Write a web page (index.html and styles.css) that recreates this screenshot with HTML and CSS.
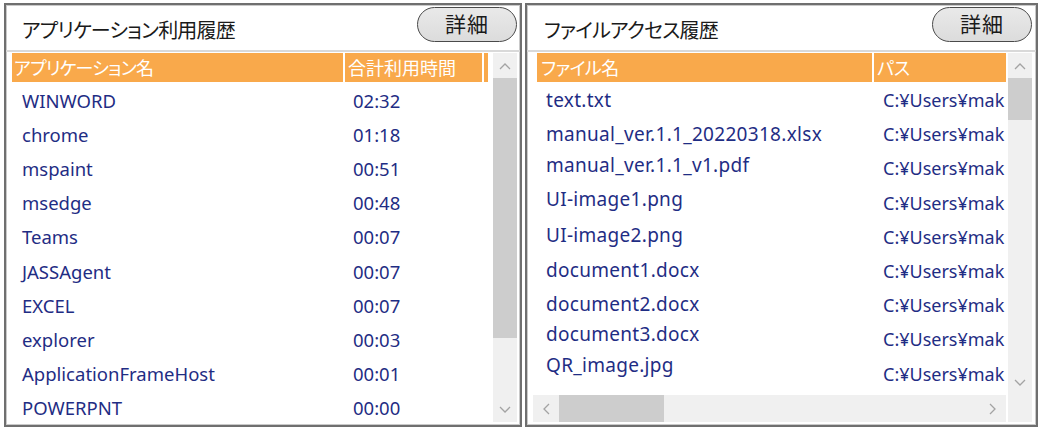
FILE: index.html
```html
<!DOCTYPE html>
<html lang="ja">
<head>
<meta charset="utf-8">
<title>履歴</title>
<link rel="stylesheet" href="styles.css">
</head>
<body>
<div class="screen">
  <section class="panel panel-app">
    <div class="panel-head">
      <h2 class="panel-title">アプリケーション利用履歴</h2>
      <button class="detail-btn">詳細</button>
    </div>
    <div class="list list-app">
      <div class="list-main">
        <div class="list-header">
          <div class="hcol app-name">アプリケーション名</div>
          <div class="hcol app-time">合計利用時間</div>
          <div class="hcol app-stub"></div>
        </div>
        <div class="rows">
          <div class="row"><span class="cell app-name">WINWORD</span><span class="cell app-time">02:32</span></div>
          <div class="row"><span class="cell app-name">chrome</span><span class="cell app-time">01:18</span></div>
          <div class="row"><span class="cell app-name">mspaint</span><span class="cell app-time">00:51</span></div>
          <div class="row"><span class="cell app-name">msedge</span><span class="cell app-time">00:48</span></div>
          <div class="row"><span class="cell app-name">Teams</span><span class="cell app-time">00:07</span></div>
          <div class="row"><span class="cell app-name">JASSAgent</span><span class="cell app-time">00:07</span></div>
          <div class="row"><span class="cell app-name">EXCEL</span><span class="cell app-time">00:07</span></div>
          <div class="row"><span class="cell app-name">explorer</span><span class="cell app-time">00:03</span></div>
          <div class="row"><span class="cell app-name">ApplicationFrameHost</span><span class="cell app-time">00:01</span></div>
          <div class="row"><span class="cell app-name">POWERPNT</span><span class="cell app-time">00:00</span></div>
        </div>
      </div>
      <div class="vscroll vscroll-app">
        <div class="sb-btn"><svg width="12" height="8" viewBox="0 0 12 8"><polyline points="1,7 6,2 11,7" fill="none" stroke="#a3a3a3" stroke-width="1.3"/></svg></div>
        <div class="sb-track"><div class="sb-thumb thumb-app"></div></div>
        <div class="sb-btn"><svg width="12" height="8" viewBox="0 0 12 8"><polyline points="1,1 6,6 11,1" fill="none" stroke="#a3a3a3" stroke-width="1.3"/></svg></div>
      </div>
    </div>
  </section>

  <section class="panel panel-file">
    <div class="panel-head">
      <h2 class="panel-title">ファイルアクセス履歴</h2>
      <button class="detail-btn">詳細</button>
    </div>
    <div class="list list-file">
      <div class="file-top">
        <div class="list-main file-main">
          <div class="list-header">
            <div class="hcol file-name">ファイル名</div>
            <div class="hcol file-path">パス</div>
          </div>
          <div class="rows">
            <div class="row"><span class="cell file-name">text.txt</span><span class="cell file-path">C:¥Users¥mak</span></div>
            <div class="row"><span class="cell file-name">manual_ver.1.1_20220318.xlsx</span><span class="cell file-path">C:¥Users¥mak</span></div>
            <div class="row"><span class="cell file-name up3">manual_ver.1.1_v1.pdf</span><span class="cell file-path">C:¥Users¥mak</span></div>
            <div class="row"><span class="cell file-name up4">UI-image1.png</span><span class="cell file-path">C:¥Users¥mak</span></div>
            <div class="row"><span class="cell file-name up2">UI-image2.png</span><span class="cell file-path">C:¥Users¥mak</span></div>
            <div class="row"><span class="cell file-name up1">document1.docx</span><span class="cell file-path">C:¥Users¥mak</span></div>
            <div class="row"><span class="cell file-name up1">document2.docx</span><span class="cell file-path">C:¥Users¥mak</span></div>
            <div class="row"><span class="cell file-name up5">document3.docx</span><span class="cell file-path">C:¥Users¥mak</span></div>
            <div class="row"><span class="cell file-name up9">QR_image.jpg</span><span class="cell file-path">C:¥Users¥mak</span></div>
          </div>
        </div>
        <div class="vscroll vscroll-file">
          <div class="sb-btn"><svg width="12" height="8" viewBox="0 0 12 8"><polyline points="1,7 6,2 11,7" fill="none" stroke="#a3a3a3" stroke-width="1.3"/></svg></div>
          <div class="sb-track"><div class="sb-thumb thumb-file"></div></div>
          <div class="sb-btn"><svg width="12" height="8" viewBox="0 0 12 8"><polyline points="1,1 6,6 11,1" fill="none" stroke="#a3a3a3" stroke-width="1.3"/></svg></div>
        </div>
      </div>
      <div class="file-bottom">
        <div class="hscroll">
          <div class="sb-btn-h"><svg width="8" height="12" viewBox="0 0 8 12"><polyline points="7,1 2,6 7,11" fill="none" stroke="#a3a3a3" stroke-width="1.3"/></svg></div>
          <div class="sb-track-h"><div class="sb-thumb-h"></div></div>
          <div class="sb-btn-h"><svg width="8" height="12" viewBox="0 0 8 12"><polyline points="1,1 6,6 1,11" fill="none" stroke="#a3a3a3" stroke-width="1.3"/></svg></div>
        </div>
        <div class="sb-corner"></div>
      </div>
    </div>
  </section>
</div>
</body>
</html>
```

FILE: styles.css
```css
* { box-sizing: border-box; }
body {
  margin: 0;
  background: #ffffff;
  font-family: "Noto Sans", "Noto Sans CJK JP", sans-serif;
}
.screen {
  width: 1040px;
  height: 430px;
  display: flex;
  gap: 3px;
  padding: 3px 2px 0 4px;
}
.panel {
  height: 424px;
  border: 2px solid #6f6f6f;
  box-shadow: inset 0 0 0 1px #c9c9c9;
  display: flex;
  flex-direction: column;
  background: #fff;
}
.panel-app { width: 518px; }
.panel-file { width: 513px; }

.panel-head {
  height: 45px;
  flex: none;
  display: flex;
  justify-content: space-between;
  align-items: flex-start;
  padding: 2px 3px 0 16px;
}
.panel-file .panel-head { padding-left: 17px; padding-right: 4px; }
.panel-title {
  margin: 0;
  font-family: "Noto Sans CJK JP", sans-serif;
  font-feature-settings: "palt";
  font-weight: 400;
  font-size: 20px;
  letter-spacing: -0.8px;
  line-height: 45px;
  color: #1a1a1a;
}
.detail-btn {
  width: 100px;
  height: 35px;
  border: 1.5px solid #4a4a4a;
  border-radius: 18px;
  background: linear-gradient(#e9e9e9, #dcdcdc);
  font-family: "Noto Sans CJK JP", sans-serif;
  font-size: 21px;
  line-height: 1;
  color: #1a1a1a;
  padding: 0 0 2px 0;
  letter-spacing: 1px;
}

.list {
  flex: 1;
  border-top: 2px solid #d9d9d9;
  display: flex;
  padding-top: 1px;
}
.list-app { padding-left: 6px; gap: 5px; }
.list-main { overflow: hidden; }
.list-app .list-main { width: 476px; }

.list-header {
  height: 29px;
  display: flex;
  gap: 2px;
  font-family: "Noto Sans CJK JP", sans-serif;
  font-feature-settings: "palt";
  font-size: 18px;
  color: #ffffff;
}
.hcol {
  background: #f9a94b;
  line-height: 28px;
  white-space: nowrap;
  overflow: hidden;
}
.hcol.app-name { width: 331px; padding-left: 2px; letter-spacing: -0.8px; }
.hcol.app-time { width: 137px; padding-left: 3px; }
.hcol.app-stub { width: 4px; }
.hcol.file-name { width: 335px; padding-left: 4px; letter-spacing: -0.5px; }
.hcol.file-path { width: 132px; padding-left: 3px; }

.rows { padding-top: 1px; }
.row {
  height: 34.2px;
  display: flex;
  gap: 2px;
  align-items: center;
  font-size: 18.5px;
  color: #1f2d84;
  white-space: nowrap;
}
.cell { overflow: hidden; }
.cell.app-name { width: 331px; padding-left: 10px; }
.cell.app-time { width: 137px; padding-left: 8px; }
.cell.file-name { width: 335px; padding-left: 9px; font-size: 19px; letter-spacing: 0.3px; }
.cell.file-path { width: 132px; padding-left: 9px; font-size: 18px; }
.up1 { padding-bottom: 2px; }
.up2 { padding-bottom: 4px; }
.up3 { padding-bottom: 6px; }
.up4 { padding-bottom: 8px; }
.up5 { padding-bottom: 10px; }
.up9 { padding-bottom: 18px; }

.vscroll {
  width: 24px;
  background: #f0f0f0;
  display: flex;
  flex-direction: column;
}
.vscroll-app { height: 369px; }
.vscroll-file { height: 342px; }
.sb-btn {
  height: 25px;
  flex: none;
  display: flex;
  align-items: center;
  justify-content: center;
}
.sb-track { flex: 1; }
.sb-thumb { background: #cdcdcd; }
.thumb-app { height: 260px; }
.thumb-file { height: 42px; }

.list-file {
  flex-direction: column;
  padding-left: 6px;
}
.file-top { display: flex; gap: 2px; }
.file-main { width: 473px; height: 342px; padding-left: 4px; }
.file-bottom { display: flex; gap: 2px; height: 27px; }
.hscroll {
  width: 473px;
  background: #f0f0f0;
  display: flex;
}
.sb-btn-h {
  width: 26px;
  flex: none;
  display: flex;
  align-items: center;
  justify-content: center;
}
.sb-track-h { flex: 1; }
.sb-thumb-h { width: 105px; height: 100%; background: #cdcdcd; }
.sb-corner { width: 24px; background: #f0f0f0; }
```
